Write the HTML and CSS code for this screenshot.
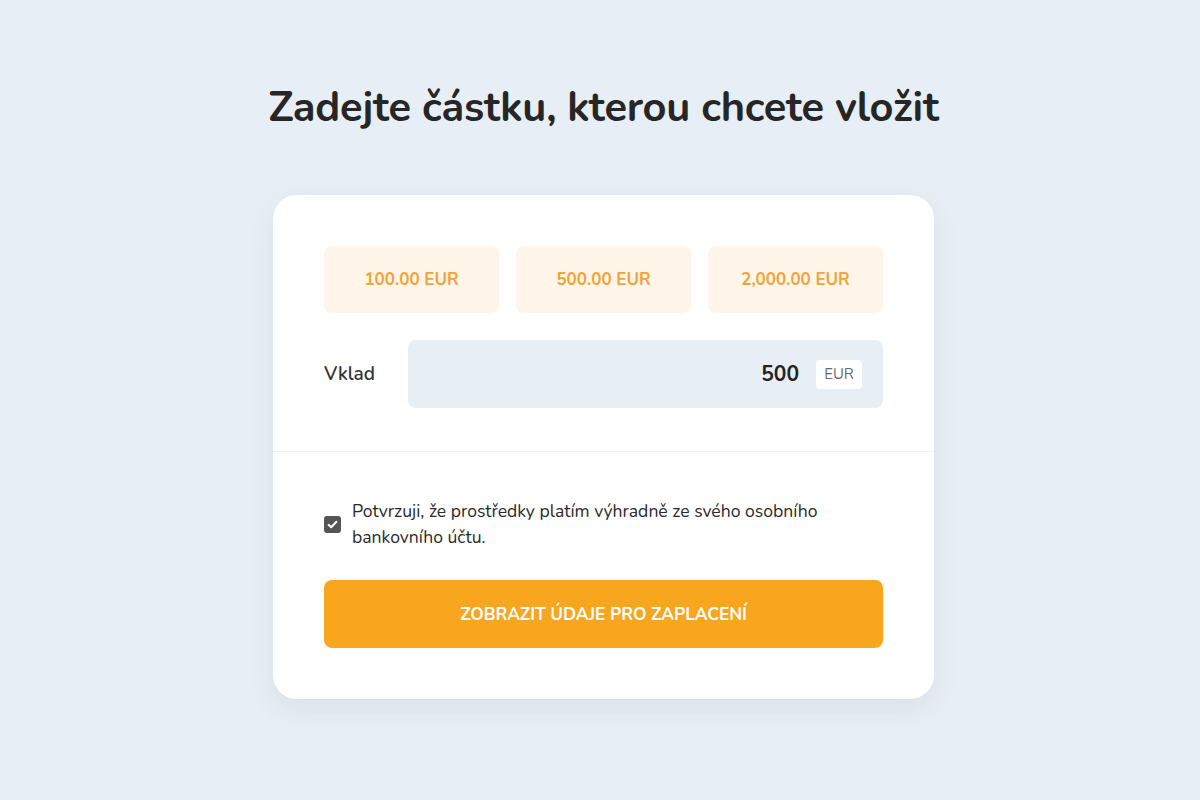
FILE: index.html
```html
<!DOCTYPE html>
<html lang="cs">
<head>
<meta charset="utf-8">
<title>Vklad</title>
<link rel="stylesheet" href="styles.css">
</head>
<body>
<main class="page">
  <h1 class="title">Zadejte částku, kterou chcete vložit</h1>
  <section class="card">
    <div class="card-top">
      <div class="presets">
        <button class="preset">100.00 EUR</button>
        <button class="preset">500.00 EUR</button>
        <button class="preset">2,000.00 EUR</button>
      </div>
      <div class="amount-row">
        <label class="amount-label">Vklad</label>
        <div class="amount-field">
          <span class="amount-value">500</span>
          <span class="currency">EUR</span>
        </div>
      </div>
    </div>
    <div class="card-bottom">
      <label class="confirm">
        <span class="checkbox">
          <svg viewBox="0 0 16 16" width="13" height="13"><path d="M3.2 8.4 L6.4 11.4 L12.8 4.6" fill="none" stroke="#fff" stroke-width="2.4" stroke-linecap="round" stroke-linejoin="round"/></svg>
        </span>
        <span class="confirm-text">Potvrzuji, že prostředky platím výhradně ze svého osobního bankovního účtu.</span>
      </label>
      <button class="submit">ZOBRAZIT ÚDAJE PRO ZAPLACENÍ</button>
    </div>
  </section>
</main>
</body>
</html>
```

FILE: styles.css
```css
* { box-sizing: border-box; }
html, body { margin: 0; padding: 0; }
body {
  background: #e8eef5;
  font-family: "Nunito", "Lato", "Open Sans", sans-serif;
  color: #252525;
  min-height: 800px;
}
.page {
  display: flex;
  flex-direction: column;
  align-items: center;
  padding-top: 82px;
  padding-left: 7px;
}
.title {
  margin: 0;
  font-size: 41.6px;
  line-height: 52px;
  font-weight: 700;
  color: #262626;
  letter-spacing: -0.2px;
}
.card {
  margin-top: 61px;
  width: 661px;
  background: #fff;
  border-radius: 24px;
  box-shadow: 0 10px 28px rgba(40, 60, 90, 0.07);
}
.card-top {
  padding: 51px 51px 43px;
  border-bottom: 1px solid #eef1f5;
}
.presets {
  display: grid;
  grid-template-columns: repeat(3, 1fr);
  gap: 17px;
}
.preset {
  height: 67px;
  border: none;
  border-radius: 8px;
  background: #fff5e8;
  color: #f0a437;
  font-family: inherit;
  font-weight: 700;
  font-size: 17px;
}
.amount-row {
  margin-top: 27px;
  display: flex;
  align-items: center;
}
.amount-label {
  width: 84px;
  font-size: 19px;
  font-weight: 600;
  color: #333;
}
.amount-field {
  flex: 1;
  height: 68px;
  background: #e8eef5;
  border-radius: 8px;
  display: flex;
  align-items: center;
  justify-content: flex-end;
  padding-right: 21px;
  gap: 17px;
}
.amount-value {
  font-size: 21px;
  font-weight: 700;
  color: #222;
}
.currency {
  background: #fff;
  border-radius: 4px;
  width: 46px;
  height: 29px;
  display: flex;
  align-items: center;
  justify-content: center;
  font-size: 15px;
  color: #6b6b6b;
}
.card-bottom {
  padding: 46px 51px 51px;
}
.confirm {
  display: flex;
  align-items: center;
  gap: 11px;
}
.checkbox {
  flex: none;
  width: 17px;
  height: 17px;
  border-radius: 3px;
  background: #555;
  display: flex;
  align-items: center;
  justify-content: center;
}
.confirm-text {
  font-size: 17.6px;
  line-height: 26px;
  color: #2a2a2a;
}
.submit {
  margin-top: 30px;
  width: 100%;
  height: 68px;
  border: none;
  border-radius: 8px;
  background: #f8a61e;
  color: #fff;
  font-family: inherit;
  font-size: 17.2px;
  font-weight: 700;
}
```
